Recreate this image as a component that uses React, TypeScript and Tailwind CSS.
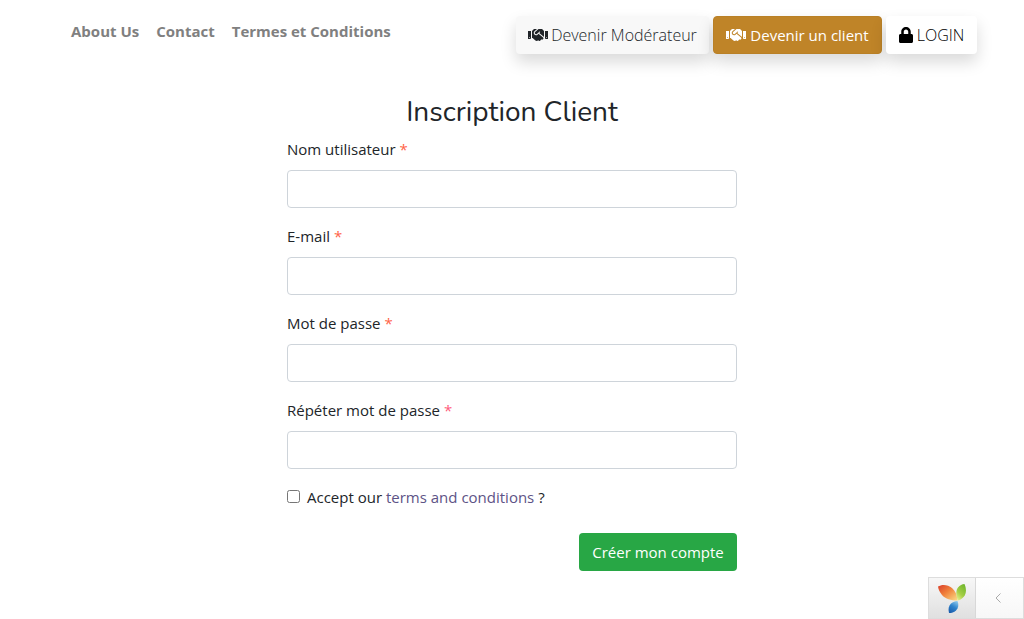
import { FaHandshake, FaLock } from "react-icons/fa";

const links = ["About Us", "Contact", "Termes et Conditions"];

const fields = [
  { id: "username", label: "Nom utilisateur", type: "text", star: "text-[#ff6347]" },
  { id: "email", label: "E-mail", type: "email", star: "text-[#ff6347]" },
  { id: "password", label: "Mot de passe", type: "password", star: "text-[#ff6347]" },
  { id: "repeat", label: "Répéter mot de passe", type: "password", star: "text-[#ff5c7c]" },
];

function YiiLogo() {
  return (
    <svg width="30" height="32" viewBox="0 0 30 32" aria-hidden="true">
      <defs>
        <linearGradient id="leaf-red" x1="0" y1="0" x2="1" y2="1">
          <stop offset="0" stopColor="#d93d2b" />
          <stop offset="0.45" stopColor="#f0803a" />
          <stop offset="1" stopColor="#fbdf8a" />
        </linearGradient>
        <linearGradient id="leaf-green" x1="0.8" y1="0" x2="0.2" y2="1">
          <stop offset="0" stopColor="#6fb52c" />
          <stop offset="0.6" stopColor="#a4cf45" />
          <stop offset="1" stopColor="#e9ee8c" />
        </linearGradient>
        <linearGradient id="leaf-blue" x1="0.8" y1="0" x2="0.3" y2="1">
          <stop offset="0" stopColor="#8cc8ec" />
          <stop offset="0.5" stopColor="#2f83cb" />
          <stop offset="1" stopColor="#1c5fae" />
        </linearGradient>
      </defs>
      <path d="M1 4.5C5 2 11 2.500 15 6C18.500 9 20 13 20.500 18.500C14 18.500 8.500 17 5 13C2.500 10 1.500 7.500 1 4.500Z" fill="url(#leaf-red)" />
      <path d="M27.500 2C29.500 7 29.500 11 27 14.500C25 17 23 18 20.800 18.500C19 13 18.500 9 21 5.500C23 3 25 2.200 27.500 2Z" fill="url(#leaf-green)" />
      <path d="M20.500 19C22 23 21.500 26 19 28.500C17 30.500 14.500 31 12 31C11 27 11.500 24 14 21.500C16 19.800 18 19.200 20.500 19Z" fill="url(#leaf-blue)" />
    </svg>
  );
}

export default function App() {
  return (
    <div className="min-h-screen bg-white font-['Open_Sans','Noto_Sans',sans-serif] text-[15px] leading-6 text-[#212529]">
      <header className="flex items-start justify-between py-4 pr-[47px] pl-[71px]">
        <nav className="flex gap-[17px] pt-[3px] font-bold text-[#808080]">
          {links.map((link) => (
            <a key={link} href="#">{link}</a>
          ))}
        </nav>
        <div className="flex gap-1">
          <a href="#" className="flex h-[38px] w-[193px] items-center justify-center gap-[3px] rounded bg-[#f8f8f8] text-base font-light whitespace-nowrap shadow-[0_8px_16px_rgba(0,0,0,0.15)]">
            <FaHandshake className="h-4 w-5 shrink-0" />
            Devenir Modérateur
          </a>
          <a href="#" className="flex h-[38px] w-[169px] items-center justify-center gap-1 rounded border border-[#b98026] bg-[#bf8428] whitespace-nowrap text-white shadow-[0_8px_16px_rgba(0,0,0,0.15)]">
            <FaHandshake className="h-4 w-5 shrink-0" />
            Devenir un client
          </a>
          <a href="#" className="flex h-[38px] w-[91px] items-center justify-center gap-1 rounded bg-white text-base font-light whitespace-nowrap text-black shadow-[0_8px_16px_rgba(0,0,0,0.15)]">
            <FaLock className="h-4 w-[14px] shrink-0" />
            LOGIN
          </a>
        </div>
      </header>

      <main className="mx-auto max-w-[450px] pt-[25px]">
        <h1 className="mb-2 text-center font-[Nunito,'Open_Sans',sans-serif] text-[28px] leading-[34px]">Inscription Client</h1>
        <form onSubmit={(e) => e.preventDefault()}>
          {fields.map((f) => (
            <div key={f.id} className="mb-4">
              <label htmlFor={f.id} className="mb-2 block leading-[25px]">
                {f.label} <span className={f.star}>*</span>
              </label>
              <input id={f.id} type={f.type} required className="block h-[38px] w-full rounded border border-[#ced4da] bg-white px-3" />
            </div>
          ))}
          <div className="mb-6 flex items-center">
            <input id="terms" type="checkbox" className="mr-[7px] mb-[2px] size-[13px]" />
            <label htmlFor="terms">
              Accept our <a href="#" className="text-[#5d5386]">terms and conditions</a> ?
            </label>
          </div>
          <div className="flex justify-end">
            <button type="submit" className="h-[38px] w-[158px] rounded bg-[#28a745] whitespace-nowrap text-white">Créer mon compte</button>
          </div>
        </form>
      </main>

      <aside className="fixed right-0 bottom-0 flex h-[42px] w-24 border border-[#dddddd]">
        <a href="#" aria-label="Yii debugger" className="flex w-[46px] items-center justify-center bg-linear-to-b from-[#f7f7f7] to-[#e0e0e0]">
          <YiiLogo />
        </a>
        <button type="button" aria-label="Toggle toolbar" className="flex flex-1 items-center justify-center border-l border-[#d8d8d8] bg-linear-to-b from-white to-[#f7f7f7] pr-1">
          <svg width="6" height="10" viewBox="0 0 6 10" fill="none" stroke="#aaaaaa" aria-hidden="true">
            <path d="M5.5 0.5L1 5L5.5 9.5" />
          </svg>
        </button>
      </aside>
    </div>
  );
}
